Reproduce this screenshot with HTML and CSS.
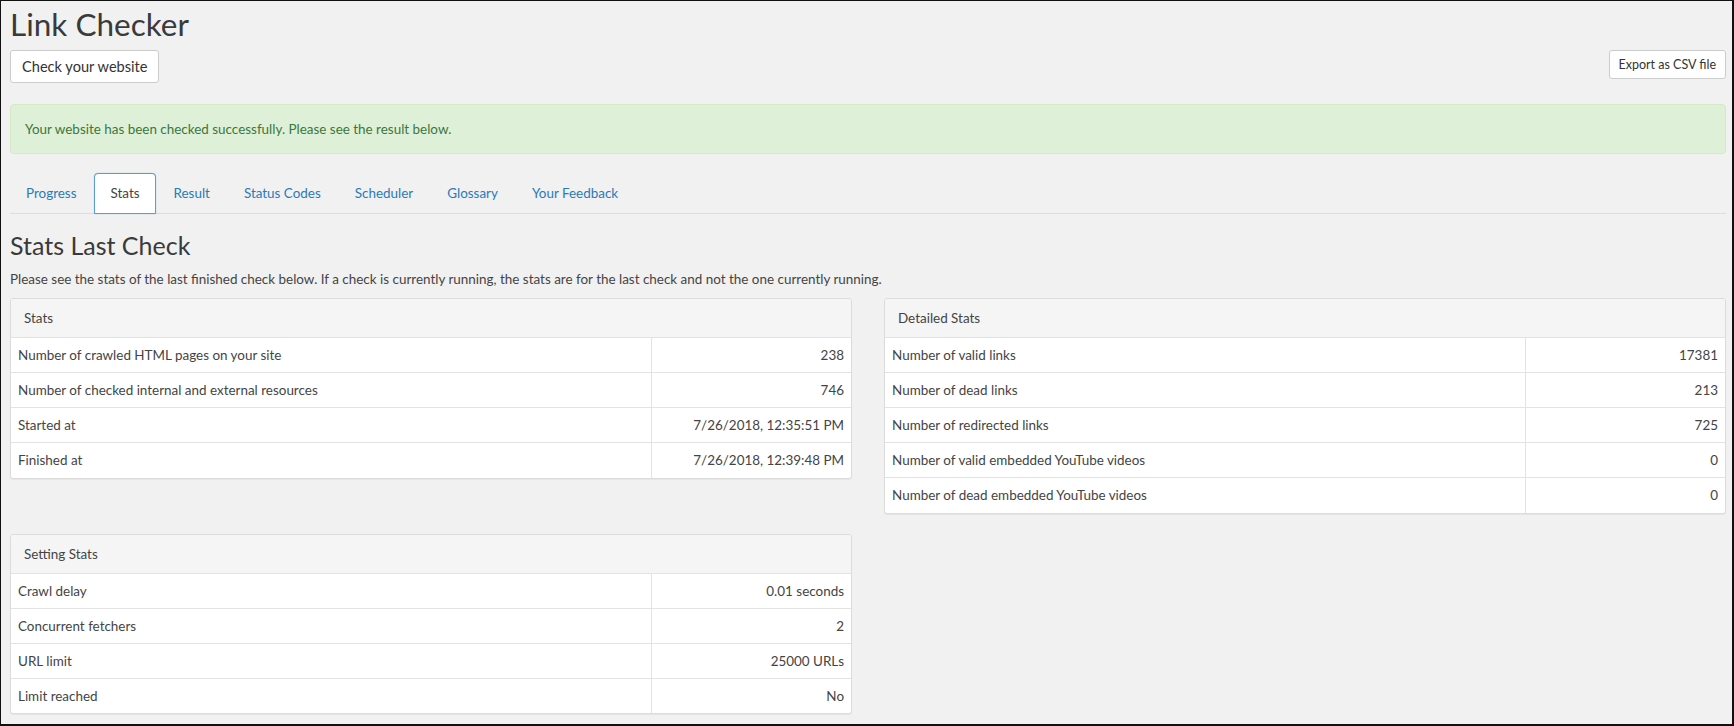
FILE: index.html
```html
<!DOCTYPE html>
<html lang="en">
<head>
<meta charset="utf-8">
<title>Link Checker</title>
<link rel="stylesheet" href="styles.css">
</head>
<body>
<div class="frame">
  <h1 class="title">Link Checker</h1>
  <div class="toolbar">
    <button class="btn btn-lg">Check your website</button>
    <button class="btn btn-sm">Export as CSV file</button>
  </div>
  <div class="alert">Your website has been checked successfully. Please see the result below.</div>
  <ul class="tabs">
    <li><a class="tab">Progress</a></li>
    <li><a class="tab active">Stats</a></li>
    <li><a class="tab">Result</a></li>
    <li><a class="tab">Status Codes</a></li>
    <li><a class="tab">Scheduler</a></li>
    <li><a class="tab">Glossary</a></li>
    <li><a class="tab">Your Feedback</a></li>
  </ul>
  <h2 class="section-title">Stats Last Check</h2>
  <p class="intro">Please see the stats of the last finished check below. If a check is currently running, the stats are for the last check and not the one currently running.</p>
  <div class="grid">
    <div class="col">
      <div class="card">
        <div class="card-head">Stats</div>
        <table class="stats">
          <tr><td>Number of crawled HTML pages on your site</td><td class="val">238</td></tr>
          <tr><td>Number of checked internal and external resources</td><td class="val">746</td></tr>
          <tr><td>Started at</td><td class="val">7/26/2018, 12:35:51 PM</td></tr>
          <tr><td>Finished at</td><td class="val">7/26/2018, 12:39:48 PM</td></tr>
        </table>
      </div>
      <div class="card">
        <div class="card-head">Setting Stats</div>
        <table class="stats">
          <tr><td>Crawl delay</td><td class="val">0.01 seconds</td></tr>
          <tr><td>Concurrent fetchers</td><td class="val">2</td></tr>
          <tr><td>URL limit</td><td class="val">25000 URLs</td></tr>
          <tr><td>Limit reached</td><td class="val">No</td></tr>
        </table>
      </div>
    </div>
    <div class="col">
      <div class="card">
        <div class="card-head">Detailed Stats</div>
        <table class="stats">
          <tr><td>Number of valid links</td><td class="val">17381</td></tr>
          <tr><td>Number of dead links</td><td class="val">213</td></tr>
          <tr><td>Number of redirected links</td><td class="val">725</td></tr>
          <tr><td>Number of valid embedded YouTube videos</td><td class="val">0</td></tr>
          <tr><td>Number of dead embedded YouTube videos</td><td class="val">0</td></tr>
        </table>
      </div>
    </div>
  </div>
</div>
</body>
</html>
```

FILE: styles.css
```css
* { box-sizing: border-box; }
html, body { margin: 0; padding: 0; }
body {
  font-family: "Lato", "Open Sans", sans-serif;
  font-size: 13.45px;
  color: #444;
  background: #f1f1f1;
}
.frame {
  height: 726px;
  overflow: hidden;
  border-style: solid;
  border-color: #111;
  border-width: 1px 2px 2px 1px;
  background: #f1f1f1;
  padding: 0 6px 0 9px;
}
.title {
  margin: 0;
  padding-top: 3px;
  font-size: 31.5px;
  line-height: 40px;
  font-weight: 400;
  color: #3a3a3a;
}
.toolbar {
  display: flex;
  justify-content: space-between;
  align-items: flex-start;
  margin-top: 6px;
}
.btn {
  font-family: inherit;
  background: #fff;
  border: 1px solid #ccc;
  border-radius: 3px;
  color: #333;
  cursor: pointer;
}
.btn-lg {
  height: 33px;
  padding: 0 11px;
  font-size: 14.6px;
}
.btn-sm {
  height: 29px;
  padding: 0 9px;
  font-size: 12.5px;
}
.alert {
  margin-top: 21px;
  height: 50px;
  display: flex;
  align-items: center;
  padding: 0 14px;
  background: #dff0d8;
  border: 1px solid #d6e9c6;
  border-radius: 4px;
  color: #3c763d;
}
.tabs {
  list-style: none;
  margin: 19px 0 0;
  padding: 0;
  display: flex;
  border-bottom: 1px solid #ddd;
}
.tabs li { margin-right: 2px; margin-bottom: -1px; }
.tab {
  display: block;
  height: 41px;
  line-height: 39px;
  padding: 0 15px;
  border: 1px solid transparent;
  border-radius: 4px 4px 0 0;
  color: #2a7ab9;
}
.tab.active {
  background: #fff;
  color: #444;
  border-color: #5b9dd9;
  box-shadow: 0 0 1px rgba(30,140,190,.6);
}
.section-title {
  margin: 15px 0 0;
  font-size: 25px;
  line-height: 32px;
  font-weight: 400;
  color: #3a3a3a;
}
.intro {
  margin: 8px 0 0;
  line-height: 20px;
}
.grid {
  margin-top: 9px;
  display: grid;
  grid-template-columns: 1fr 1fr;
  column-gap: 32px;
  align-items: start;
}
.col {
  display: flex;
  flex-direction: column;
  gap: 55px;
}
.card {
  background: #fff;
  border: 1px solid #dcdcdc;
  border-radius: 3px;
  box-shadow: 0 1px 1px rgba(0,0,0,.05);
  overflow: hidden;
}
.card-head {
  height: 38px;
  line-height: 38px;
  padding: 0 13px;
  background: #f5f5f5;
  color: #444;
}
.stats {
  width: 100%;
  border-collapse: collapse;
}
.stats td {
  height: 35px;
  padding: 0 7px;
  border-top: 1px solid #e3e3e3;
  vertical-align: middle;
}
.stats td.val {
  width: 200px;
  text-align: right;
  border-left: 1px solid #e3e3e3;
}
```
